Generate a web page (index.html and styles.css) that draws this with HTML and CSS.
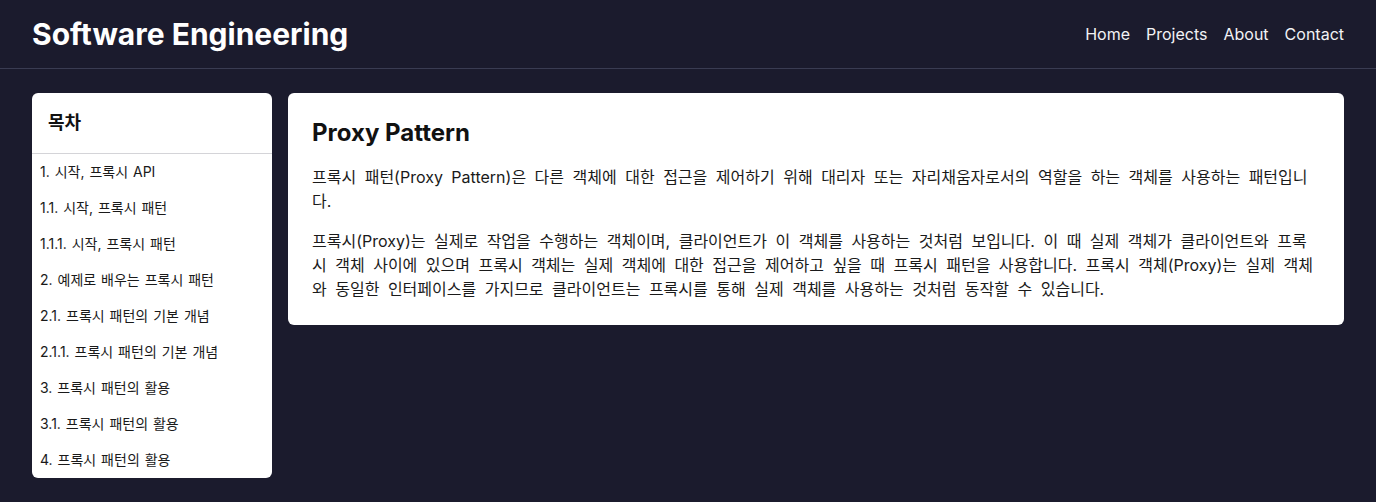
FILE: index.html
```html
<!DOCTYPE html>
<html lang="ko">
<head>
<meta charset="utf-8">
<title>Software Engineering</title>
<link rel="stylesheet" href="styles.css">
</head>
<body>
<header class="site-header">
  <div class="brand">Software Engineering</div>
  <nav class="nav">
    <a href="#">Home</a>
    <a href="#">Projects</a>
    <a href="#">About</a>
    <a href="#">Contact</a>
  </nav>
</header>
<main class="layout">
  <aside class="toc">
    <div class="toc-title">목차</div>
    <ul class="toc-list">
      <li>1. 시작, 프록시 API</li>
      <li>1.1. 시작, 프록시 패턴</li>
      <li>1.1.1. 시작, 프록시 패턴</li>
      <li>2. 예제로 배우는 프록시 패턴</li>
      <li>2.1. 프록시 패턴의 기본 개념</li>
      <li>2.1.1. 프록시 패턴의 기본 개념</li>
      <li>3. 프록시 패턴의 활용</li>
      <li>3.1. 프록시 패턴의 활용</li>
      <li>4. 프록시 패턴의 활용</li>
    </ul>
  </aside>
  <article class="content">
    <h2>Proxy Pattern</h2>
    <p>프록시 패턴(Proxy Pattern)은 다른 객체에 대한 접근을 제어하기 위해 대리자 또는 자리채움자로서의 역할을 하는 객체를 사용하는 패턴입니다.</p>
    <p>프록시(Proxy)는 실제로 작업을 수행하는 객체이며, 클라이언트가 이 객체를 사용하는 것처럼 보입니다. 이 때 실제 객체가 클라이언트와 프록시 객체 사이에 있으며 프록시 객체는 실제 객체에 대한 접근을 제어하고 싶을 때 프록시 패턴을 사용합니다. 프록시 객체(Proxy)는 실제 객체와 동일한 인터페이스를 가지므로 클라이언트는 프록시를 통해 실제 객체를 사용하는 것처럼 동작할 수 있습니다.</p>
  </article>
</main>
</body>
</html>
```
FILE: styles.css
```css
* { box-sizing: border-box; }
html, body { margin: 0; padding: 0; }
body {
  background: #1b1b2d;
  font-family: Inter, "Noto Sans CJK KR", sans-serif;
  color: #111;
  height: 502px;
  overflow: hidden;
}
.site-header {
  display: flex;
  justify-content: space-between;
  align-items: center;
  height: 69px;
  padding: 0 32px;
  border-bottom: 1px solid #3a3c52;
}
.brand {
  color: #fff;
  font-size: 30px;
  font-weight: 700;
  line-height: 36px;
}
.nav {
  display: flex;
  gap: 16px;
}
.nav a {
  color: #f2f2f5;
  text-decoration: none;
  font-size: 16px;
  line-height: 24px;
}
.layout {
  display: flex;
  align-items: flex-start;
  gap: 16px;
  padding: 24px 32px;
}
.toc {
  width: 240px;
  flex: none;
  background: #fff;
  border-radius: 6px;
  overflow: hidden;
}
.toc-title {
  padding: 16px;
  font-size: 18px;
  font-weight: 700;
  line-height: 28px;
  border-bottom: 1px solid #d4d4d8;
}
.toc-list {
  list-style: none;
  margin: 0;
  padding: 0;
}
.toc-list li {
  padding: 8px;
  font-size: 14px;
  line-height: 20px;
  color: #1a1a1a;
  word-spacing: 1px;
}
.content {
  flex: 1;
  background: #fff;
  border-radius: 6px;
  padding: 24px;
}
.content h2 {
  margin: 0 0 16px;
  font-size: 24px;
  line-height: 32px;
  font-weight: 700;
}
.content p {
  margin: 0 0 16px;
  font-size: 16px;
  line-height: 24px;
  color: #1a1a1a;
  word-spacing: 4px;
}
.content p:last-child { margin-bottom: 0; }
```
